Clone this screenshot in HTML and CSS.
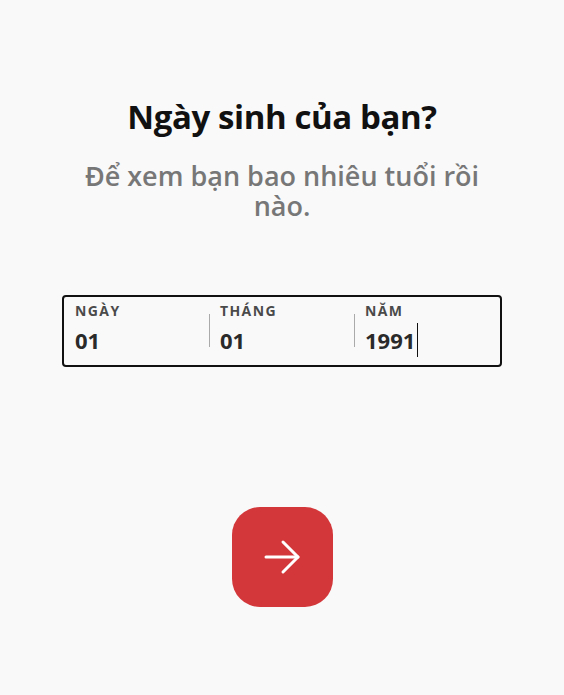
FILE: index.html
```html
<!DOCTYPE html>
<html lang="vi">
<head>
<meta charset="utf-8">
<link rel="stylesheet" href="styles.css">
</head>
<body>
<main class="page">
  <h1 class="title">Ngày sinh của bạn?</h1>
  <p class="subtitle">Để xem bạn bao nhiêu tuổi rồi nào.</p>
  <div class="dob">
    <div class="field">
      <span class="label">Ngày</span>
      <span class="value">01</span>
    </div>
    <div class="field">
      <span class="label">Tháng</span>
      <span class="value">01</span>
    </div>
    <div class="field">
      <span class="label">Năm</span>
      <span class="value">1991<span class="caret"></span></span>
    </div>
  </div>
  <button class="next" aria-label="Tiếp tục">
    <svg width="40" height="40" viewBox="0 0 40 40" fill="none" stroke="#fff" stroke-width="3" stroke-linecap="round" stroke-linejoin="round">
      <path d="M4 20H36"/>
      <path d="M21 5L36 20L21 35"/>
    </svg>
  </button>
</main>
</body>
</html>
```

FILE: styles.css
```css
html, body {
  margin: 0;
  padding: 0;
  background: #f9f9f9;
}
body {
  font-family: "Open Sans", "Noto Sans", sans-serif;
  color: #111;
}
.page {
  display: flex;
  flex-direction: column;
  align-items: center;
  padding-top: 94px;
}
.title {
  margin: 0;
  font-size: 33px;
  font-weight: 700;
  line-height: 46px;
  color: #111;
  letter-spacing: -0.4px;
}
.subtitle {
  margin: 21px 0 0;
  max-width: 420px;
  text-align: center;
  font-size: 27px;
  font-weight: 600;
  line-height: 30px;
  color: #777;
}
.dob {
  margin-top: 74px;
  width: 436px;
  height: 68px;
  border: 2px solid #111;
  border-radius: 4px;
  display: grid;
  grid-template-columns: 145px 145px 1fr;
  box-sizing: content-box;
}
.field {
  display: flex;
  flex-direction: column;
  padding: 5px 0 0 11px;
  position: relative;
}
.field + .field::before {
  content: "";
  position: absolute;
  left: 0;
  top: 17px;
  height: 33px;
  width: 1px;
  background: #aaa;
}
.label {
  font-size: 14px;
  font-weight: 700;
  letter-spacing: 1.4px;
  text-transform: uppercase;
  color: #4a4a4a;
  line-height: 18px;
}
.value {
  margin-top: 7px;
  font-size: 22px;
  font-weight: 700;
  color: #2a2a2a;
  line-height: 26px;
  display: flex;
  align-items: center;
}
.caret {
  display: inline-block;
  width: 1px;
  height: 34px;
  margin: -4px 0 -4px 2px;
  background: #111;
}
.next {
  margin-top: 140px;
  width: 101px;
  height: 100px;
  border: none;
  border-radius: 28px;
  background: #d4373a;
  display: flex;
  align-items: center;
  justify-content: center;
  padding: 0;
  cursor: pointer;
}
```
